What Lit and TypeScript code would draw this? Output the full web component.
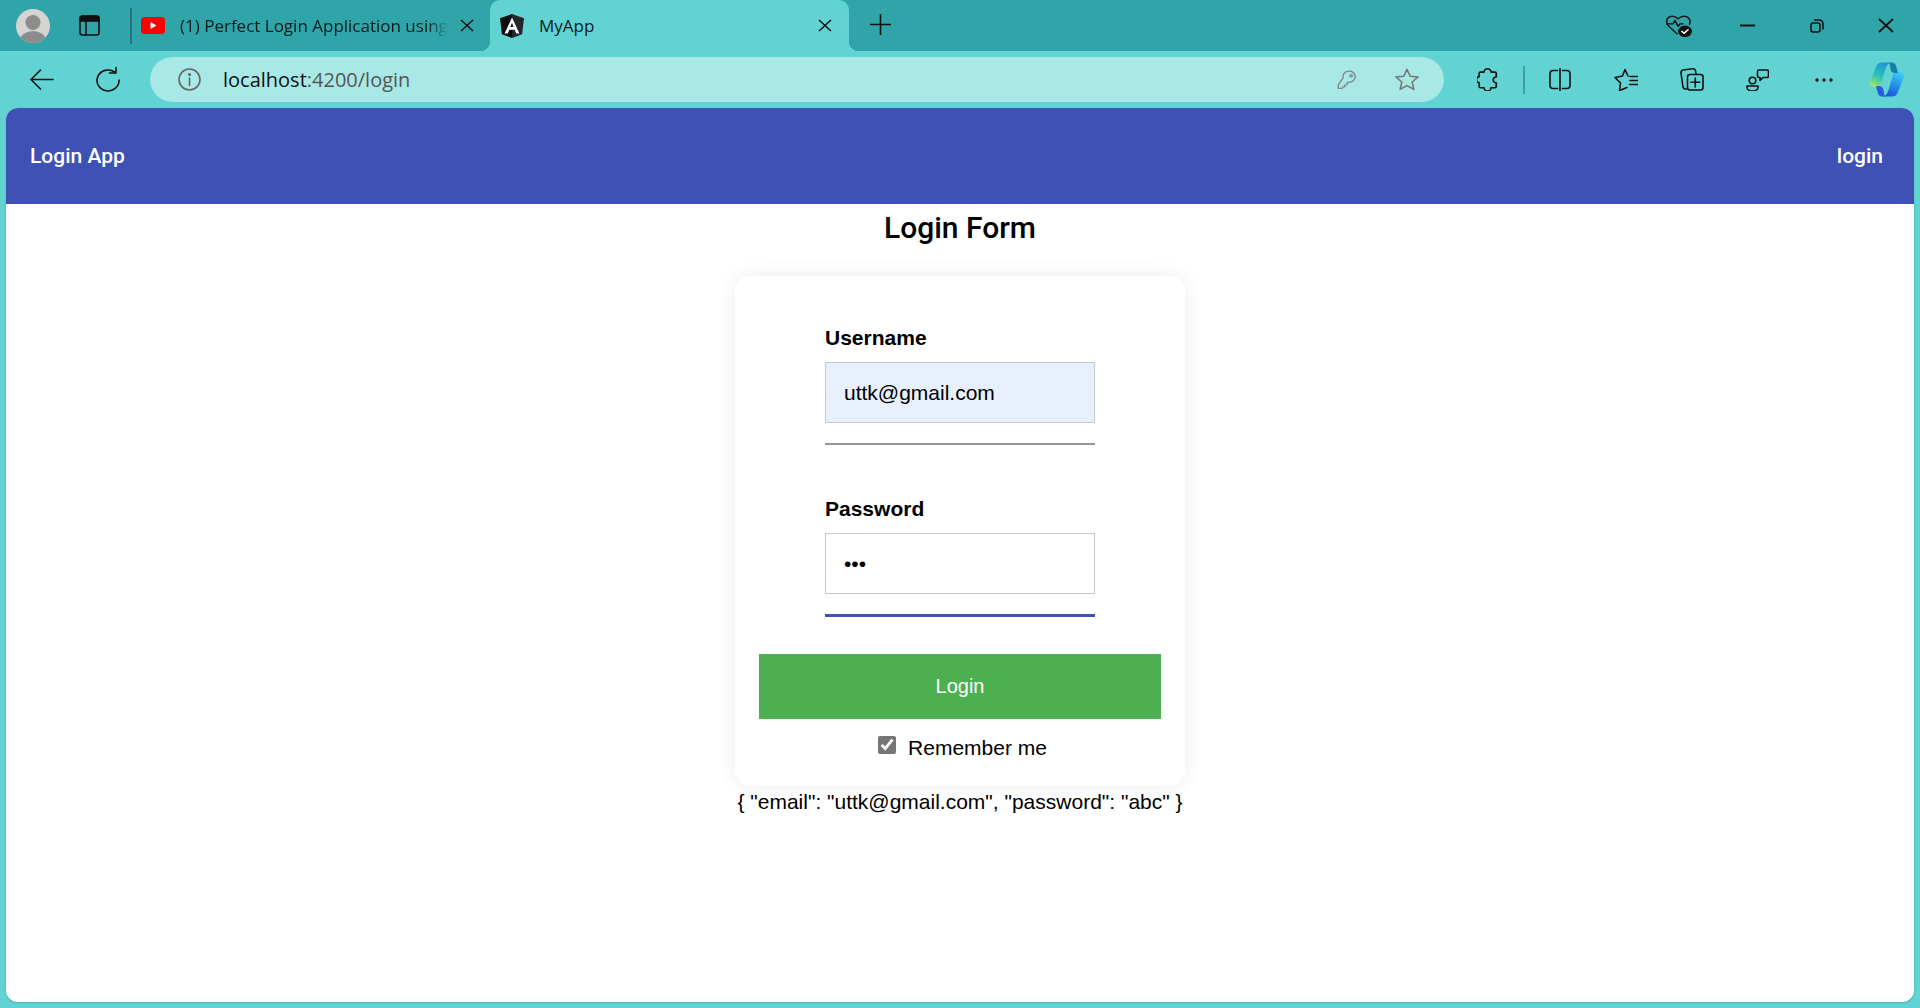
import { LitElement, html, css, svg } from "lit";
import { customElement } from "lit/decorators.js";

const ico = (w: number, h: number, body: unknown, vw = w, vh = h) => html`<svg width=${w} height=${h} viewBox="0 0 ${vw} ${vh}" preserveAspectRatio="none" fill="none" stroke="#111" stroke-width="1.6" stroke-linecap="round" stroke-linejoin="round">${body}</svg>`;

const avatar = ico(34, 34, svg`<clipPath id="av"><circle cx="17" cy="17" r="17"/></clipPath><g clip-path="url(#av)" stroke="none"><rect width="34" height="34" fill="#d6d4d0"/><circle cx="17" cy="13.500" r="7.500" fill="#8c8c8c"/><ellipse cx="17" cy="31" rx="13" ry="9" fill="#8c8c8c"/></g>`);
const sidebar = ico(21, 21, svg`<rect x="1" y="1" width="19" height="19" rx="2.500"/><path d="M1 3.500a2.500 2.500 0 0 1 2.500-2.500h14a2.500 2.500 0 0 1 2.500 2.500V6H1z" fill="#111"/><path d="M7 6v14"/>`);
const yt = ico(24, 17, svg`<rect x="0" y="0" width="24" height="17" rx="3.500" fill="#f00" stroke="none"/><path d="M9.500 5l6 3.500-6 3.500z" fill="#fff" stroke="none"/>`);
const x13 = ico(14, 13, svg`<path d="M1 1l12 11M13 1L1 12" stroke-width="1.500" stroke-linecap="butt"/>`);
const ng = ico(24, 24, svg`<path d="M12 0L0 4.200l1.900 16L12 24z" fill="#0c0c12" stroke="none"/><path d="M12 0l12 4.200-1.900 16L12 24z" fill="#24242c" stroke="none"/><path d="M12 3.500L4.600 19.500h3.200l1.500-3.800h5.400l1.500 3.800h3.200zM10.400 13L12 8.800l1.600 4.200z" fill="#fff" stroke="none"/>`);
const plus = ico(21, 21, svg`<path d="M10.500 0v21M0 10.500h21" stroke-width="1.600" stroke-linecap="butt"/>`);
const heart = ico(28, 25, svg`<path d="M12 25l-8.500-9.500C1 12.500 1 8 3.500 5.500 6 3 10 3.500 13 7c3-3.500 7.500-4 10-1.500 2.300 2.300 2.300 5.500 1.500 8"/><path d="M2 13h6l2-4 3 7 2-3h3"/><circle cx="20" cy="22" r="7" fill="#111" stroke="none"/><path d="M16.800 22l2.300 2.300 4-4.300" stroke="#fff"/>`, 28, 30);
const minimize = ico(15, 3, svg`<path d="M0 1.500h15" stroke-width="2" stroke-linecap="butt"/>`);
const restore = ico(14, 14, svg`<rect x="1" y="4" width="9" height="9" rx="2"/><path d="M4.500 1h4.500a4 4 0 0 1 4 4v5"/>`);
const bigX = ico(16, 15, svg`<path d="M1 1l14 13M15 1L1 14" stroke-width="1.800" stroke-linecap="butt"/>`);
const back = ico(24, 21, svg`<path d="M23 10.500H1.500M10.500 1L1 10.500 10.500 20" stroke-width="1.600"/>`);
const reload = ico(24, 25, svg`<path d="M18.500 5A11 10.500 0 1 0 23 13" stroke-width="1.600"/><path d="M20 0.500V6h-6.500" stroke-width="1.600"/>`);
const info = ico(23, 23, svg`<circle cx="11.500" cy="11.500" r="10.500" stroke="#666"/><path d="M11.500 10v7.500" stroke="#666"/><circle cx="11.500" cy="6.500" r=".8" fill="#666" stroke="#666"/>`);
const key = ico(20, 20, svg`<path d="M13.500 1.500a7 7 0 0 0-6.800 8.800L1.500 19v5h4l1-2h2v-2.500h2l1-3.500a7 7 0 1 0 2-15z" stroke="#7a8c8c"/><circle cx="15.500" cy="7.500" r="1.400" stroke="#7a8c8c"/>`, 22, 26);
const star = ico(24, 23, svg`<path d="M13 1.500l3.500 7.800 8.500.9-6.400 5.600 1.800 8.400L13 20l-7.400 4.200 1.800-8.400L1 10.200l8.500-.9z" stroke="#777" stroke-width="1.700"/>`, 26, 26);
const puzzle = ico(21, 23, svg`<path d="M8 5a4 4 0 0 1 8 0h4.500a1.500 1.500 0 0 1 1.500 1.500V11a3.500 3.500 0 0 0 0 7v4.500a1.500 1.500 0 0 1-1.500 1.500H16a4 4 0 0 1-8 0H4a1.500 1.500 0 0 1-1.500-1.500V18a3.800 3.800 0 0 1 0-7.500V6.500A1.500 1.500 0 0 1 4 5z" stroke-width="1.900"/>`, 24, 28);
const split = ico(22, 23, svg`<path d="M8.500 2.500H4a3 3 0 0 0-3 3v12a3 3 0 0 0 3 3h4.500M13.500 2.500H18a3 3 0 0 1 3 3v12a3 3 0 0 1-3 3h-4.500M11 0v23"/>`);
const favs = ico(24, 23, svg`<path d="M13 19.500l-7.500 3 1-7.500L1 9.500l7.500-1.500L11 1.500l3 6.500M16 8.500h7.500M16 12.500h7.500M15.500 16.500h8"/>`);
const coll = ico(24, 23, svg`<path d="M6.500 21H5.500a2.500 2.500 0 0 1-2.500-2L1 5A2.500 2.500 0 0 1 3 2l9.500-1.200a2.500 2.500 0 0 1 3 2l.4 3"/><rect x="7.500" y="6.500" width="15.500" height="15.500" rx="2.500"/><path d="M15.250 10v9M10.800 14.250h9"/>`);
const fb = ico(23, 22, svg`<circle cx="6.500" cy="11.500" r="3.300"/><path d="M1 17h11v1.500a5.500 3.500 0 0 1-11 0z"/><path d="M11.500 2.500a1.500 1.500 0 0 1 1.500-1.500h8a1.500 1.500 0 0 1 1.500 1.500V7a1.500 1.500 0 0 1-1.500 1.500H17l-3 3V8.500h-1A1.500 1.500 0 0 1 11.500 7z"/>`);
const more = ico(18, 4, svg`<circle cx="2" cy="2" r="1.700" fill="#111" stroke="none"/><circle cx="9" cy="2" r="1.700" fill="#111" stroke="none"/><circle cx="16" cy="2" r="1.700" fill="#111" stroke="none"/>`);
const copilot = ico(36, 35, svg`<defs>
<linearGradient id="cpa" x1="0.600" y1="0" x2="0.200" y2="1"><stop offset="0" stop-color="#1f93d6"/><stop offset=".55" stop-color="#2cc3b4"/><stop offset="1" stop-color="#a4e26e"/></linearGradient>
<linearGradient id="cpb" x1="0.700" y1="0" x2="0.300" y2="1"><stop offset="0" stop-color="#3ecbf2"/><stop offset=".6" stop-color="#1f86e6"/><stop offset="1" stop-color="#2a4fd8"/></linearGradient></defs>
<path d="M13 .5h10c-4 .5-5.500 3-6.500 6.500L12 22c-.5 1.500-1.500 3-4 3H4C1.500 25 .5 22.500 1 20L7 5c1-3 3-4.500 6-4.500z" fill="url(#cpa)" stroke="none"/>
<path d="M23 34.500H13c4-.5 5.500-3 6.500-6.500L24 13c.5-1.500 1.500-3 4-3h4c2.500 0 3.500 2.500 3 5l-6 15c-1 3-3 4.500-6 4.500z" fill="url(#cpb)" stroke="none"/>
<path d="M20 .5h3c3 0 4 2.500 4.500 5L29 11h-3c-2 0-4-1-4.500-4C21 4 21 2 20 .5z" fill="#1a7fa8" stroke="none"/>
<path d="M16 34.500h-3c-3 0-4-2.500-4.500-5L7 24h3c2 0 4 1 4.500 4 .5 3 .5 5 1.500 6.500z" fill="#2a5ce0" stroke="none"/>`);

@customElement("app-root")
export class AppRoot extends LitElement {
  static styles = css`
    :host { display: flex; flex-direction: column; height: 1008px; background: #61d3d3; font-family: "Liberation Sans", Arial, sans-serif; color: #000; overflow: hidden; }
    .strip { height: 51px; display: flex; align-items: stretch; background: #30a5a9; flex: none; }
    .slot { display: flex; align-items: center; justify-content: center; flex: none; }
    .s-av { width: 66px; }
    .s-side { width: 47px; }
    .tabsep { width: 2px; height: 36px; margin: 8px 0 0 17px; background: #23777b; flex: none; }
    .tab { position: relative; display: flex; align-items: center; flex: none; font: 400 17px "Open Sans", sans-serif; color: #0a1a1a; }
    .t1 { width: 358px; padding: 0 0 0 9px; box-sizing: border-box; }
    .t1 .title { width: 268px; margin-left: 15px; white-space: nowrap; overflow: hidden; -webkit-mask-image: linear-gradient(90deg, #000 92%, transparent); mask-image: linear-gradient(90deg, #000 92%, transparent); }
    .t1 .cl { margin-left: 12px; }
    .t2 { width: 359px; background: #61d3d3; border-radius: 10px 10px 0 0; padding-left: 10px; box-sizing: border-box; }
    .t2::before, .t2::after { content: ""; position: absolute; bottom: 0; width: 10px; height: 10px; }
    .t2::before { left: -10px; background: radial-gradient(circle at 0 0, transparent 10px, #61d3d3 10.500px); }
    .t2::after { right: -10px; background: radial-gradient(circle at 100% 0, transparent 10px, #61d3d3 10.500px); }
    .t2 .title { margin-left: 15px; flex: 1; }
    .t2 .cl { margin-right: 17px; }
    .cl { display: flex; }
    .s-plus { width: 62px; padding-bottom: 2px; box-sizing: border-box; }
    .grow { flex: 1; }
    .s-win { width: 69px; }

    .toolbar { height: 57px; display: flex; align-items: center; padding-left: 9px; flex: none; }
    .s-nav { width: 66px; }
    .addr { width: 1294px; height: 45px; margin: 0 0 0 9px; background: #a8e8e6; border-radius: 23px; display: flex; align-items: center; flex: none; }
    .s-info { width: 78px; }
    .url { flex: 1; font: 400 20px "Open Sans", sans-serif; margin-left: -5px; color: #111; }
    .url span { color: #555; }
    .s-key { width: 60px; }
    .s-star { width: 60px; margin-right: 7px; }
    .s-tool { width: 66px; }
    .s-first { margin-left: 10px; }
    .toolsep { width: 2px; height: 28px; background: #3f9da0; margin: 0 1.500px 0 3px; flex: none; }
    .s-cop { width: 60px; }

    .page { flex: 1; margin: 0 6px 6px; background: #fff; border-radius: 12px; overflow: hidden; display: flex; flex-direction: column; align-items: center; box-shadow: 0 1px 2px rgba(0, 70, 70, .22); }
    .nav { align-self: stretch; height: 96px; background: #3f51b5; color: #fff; display: flex; align-items: center; justify-content: space-between; padding: 0 31px 0 24px; font: 500 21px Roboto, sans-serif; flex: none; }
    h2 { margin: 4px 0 0; font: 500 30px/40px Roboto, sans-serif; height: 40px; }
    .card { width: 450px; box-sizing: border-box; margin-top: 28px; padding: 50px 24px 0; height: 510px; border-radius: 16px; box-shadow: 0 0 20px rgba(0,0,0,.08); display: flex; flex-direction: column; align-items: center; flex: none; }
    .field { width: 270px; display: flex; flex-direction: column; }
    label.lb { font: 700 21px/24px "Liberation Sans", sans-serif; margin-bottom: 12px; }
    input.tx { box-sizing: border-box; width: 270px; height: 61px; border: 1.500px solid #c8c8c8; padding: 0 18px; margin: 0; font: 400 21px "Liberation Sans", sans-serif; background: #fff; color: #000; outline: none; border-radius: 0; }
    input.auto { background: #e8f0fe; }
    .line { height: 2px; margin-top: 20px; background: #949494; }
    .line.on { height: 3px; background: #3f51b5; }
    .f2 { margin-top: 52px; }
    .btn { width: 402px; height: 65px; margin-top: 37px; background: #4caf50; color: #fff; border: 0; font: 400 20px "Liberation Sans", sans-serif; flex: none; padding: 0; }
    .rem { display: flex; align-items: center; gap: 12px; margin: 17px 0 0 5px; font: 400 21px/24px "Liberation Sans", sans-serif; }
    .rem input { width: 18px; height: 18px; margin: -7px 0 0; accent-color: #767676; }
    .json { margin-top: 4px; font: 400 21px/24px "Liberation Sans", sans-serif; white-space: nowrap; }
  `;

  render() {
    return html`
      <div class="strip">
        <div class="slot s-av">${avatar}</div>
        <div class="slot s-side">${sidebar}</div>
        <div class="tabsep"></div>
        <div class="tab t1">${yt}<span class="title">(1) Perfect Login Application using Angular</span><span class="cl">${x13}</span></div>
        <div class="tab t2">${ng}<span class="title">MyApp</span><span class="cl">${x13}</span></div>
        <div class="slot s-plus">${plus}</div>
        <div class="grow"></div>
        <div class="slot s-win">${heart}</div>
        <div class="slot s-win">${minimize}</div>
        <div class="slot s-win">${restore}</div>
        <div class="slot s-win">${bigX}</div>
      </div>
      <div class="toolbar">
        <div class="slot s-nav">${back}</div>
        <div class="slot s-nav">${reload}</div>
        <div class="addr">
          <div class="slot s-info">${info}</div>
          <div class="url">localhost<span>:4200/login</span></div>
          <div class="slot s-key">${key}</div>
          <div class="slot s-star">${star}</div>
        </div>
        <div class="slot s-tool s-first">${puzzle}</div>
        <div class="toolsep"></div>
        <div class="slot s-tool">${split}</div>
        <div class="slot s-tool">${favs}</div>
        <div class="slot s-tool">${coll}</div>
        <div class="slot s-tool">${fb}</div>
        <div class="slot s-tool">${more}</div>
        <div class="slot s-cop">${copilot}</div>
      </div>
      <div class="page">
        <div class="nav"><span>Login App</span><span>login</span></div>
        <h2>Login Form</h2>
        <div class="card">
          <div class="field">
            <label class="lb">Username</label>
            <input class="tx auto" type="text" .value=${"uttk@gmail.com"} />
            <div class="line"></div>
          </div>
          <div class="field f2">
            <label class="lb">Password</label>
            <input class="tx" type="password" .value=${"abc"} />
            <div class="line on"></div>
          </div>
          <button class="btn">Login</button>
          <label class="rem"><input type="checkbox" checked /><span>Remember me</span></label>
        </div>
        <div class="json">{ "email": "uttk@gmail.com", "password": "abc" }</div>
      </div>
    `;
  }
}
